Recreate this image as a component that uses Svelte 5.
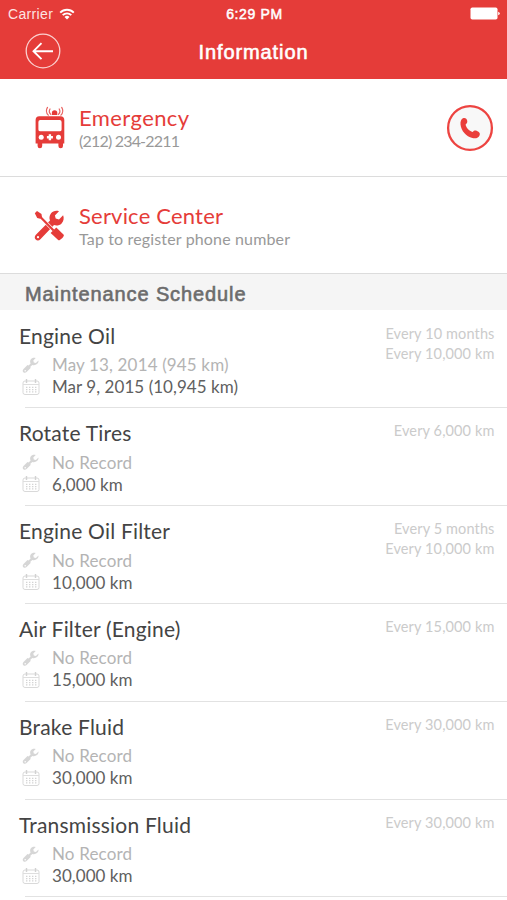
<script lang="ts">
	type Item = {
		name: string;
		last: string;
		next: string;
		every: string[];
	};

	const items: Item[] = [
		{
			name: 'Engine Oil',
			last: 'May 13, 2014 (945 km)',
			next: 'Mar 9, 2015 (10,945 km)',
			every: ['Every 10 months', 'Every 10,000 km']
		},
		{ name: 'Rotate Tires', last: 'No Record', next: '6,000 km', every: ['Every 6,000 km'] },
		{
			name: 'Engine Oil Filter',
			last: 'No Record',
			next: '10,000 km',
			every: ['Every 5 months', 'Every 10,000 km']
		},
		{ name: 'Air Filter (Engine)', last: 'No Record', next: '15,000 km', every: ['Every 15,000 km'] },
		{ name: 'Brake Fluid', last: 'No Record', next: '30,000 km', every: ['Every 30,000 km'] },
		{ name: 'Transmission Fluid', last: 'No Record', next: '30,000 km', every: ['Every 30,000 km'] }
	];
</script>

<div class="screen">
	<header>
		<div class="status">
			<div class="carrier">
				<span>Carrier</span>
				<svg width="16" height="12" viewBox="0 0 16 12">
					<g fill="none" stroke="#fff" stroke-width="1.9">
						<path d="M1.2 4.6a9.6 9.6 0 0 1 13.6 0" />
						<path d="M3.7 7.1a6.1 6.1 0 0 1 8.600 0" />
					</g>
					<path d="M8 11.5 5.500 8.900a3.600 3.600 0 0 1 5 0z" fill="#fff" />
				</svg>
			</div>
			<span class="time">6:29 PM</span>
			<svg class="battery" width="31" height="13" viewBox="0 0 31 13">
				<rect x="0.5" y="0.5" width="27" height="12" rx="1.8" fill="#fff" />
				<path d="M28.2 4.800q1.600.5 1.600 1.700t-1.600 1.700z" fill="#fff" />
			</svg>
		</div>
		<div class="nav">
			<button class="back" aria-label="Back">
				<svg width="36" height="36" viewBox="0 0 36 36" fill="none" stroke="#fff">
					<circle cx="18" cy="18" r="16.8" stroke-width="1.3" stroke="#fbd0cf" />
					<path d="M28 18.2H9M16.5 10.2l-8 8 8 8" stroke-width="1.9" />
				</svg>
			</button>
			<h1>Information</h1>
		</div>
	</header>

	<section class="contact">
		<svg class="contact-icon" width="32" height="44" viewBox="0 0 32 44">
			<g fill="none" stroke="#e96260" stroke-width="1.2" stroke-linecap="round">
				<path d="M16 3q-1.800 3 .8 5.400M13.500 1.400q-2.600 4.200.8 7.800M25.200 3q1.800 3-.8 5.400M27.700 1.400q2.600 4.200-.8 7.800" />
			</g>
			<path d="M17.900 9V6.900a2.700 2.700 0 0 1 5.400 0V9z" fill="#e53c39" />
			<path
				fill="#e53c39"
				fill-rule="evenodd"
				d="M5.500 10.200h21a3.800 3.800 0 0 1 3.800 3.800v23.500h-1.300v2.500a1.900 1.900 0 0 1-4.600 0v-2.500h-16.200v2.500a1.900 1.900 0 0 1-4.600 0v-2.500h-2v-23.500a3.800 3.800 0 0 1 3.900-3.800zM6.300 14a1.900 1.900 0 0 0-1.900 1.900v7.500a1.900 1.900 0 0 0 1.900 1.900h19.400a1.900 1.900 0 0 0 1.900-1.900v-7.500a1.900 1.900 0 0 0-1.900-1.900z"
			/>
			<circle cx="7.200" cy="31.300" r="2.500" fill="#fff" />
			<circle cx="24.500" cy="31.300" r="2.500" fill="#fff" />
			<path d="M15.900 28.300v6M12.900 31.300h6" stroke="#fff" stroke-width="2.400" />
		</svg>
		<div>
			<h2>Emergency</h2>
			<p class="phone">(212) 234-2211</p>
		</div>
		<button class="call" aria-label="Call">
			<svg width="48" height="48" viewBox="0 0 48 48">
				<circle cx="24" cy="24" r="21.9" fill="#f8f8f8" stroke="#ed4441" stroke-width="2.3" />
				<path
					fill="#ea3e3b"
					d="M17 14.200c1.800-.7 3.500 0 4.100 2.100.5 1.700.2 3-1.500 4.100.5 3 3.300 6.300 7.200 7.600 1.200-1.500 2.400-1.800 4.200-1 2.300.9 3.300 2.200 2.700 3.900-.8 2.600-3.800 4-7.300 3.100-6.200-1.500-11.300-7.200-11.900-13.500-.3-3.100.8-5.600 2.500-6.300z"
				/>
			</svg>
		</button>
	</section>

	<section class="contact service">
		<svg class="contact-icon" width="32" height="32" viewBox="0 0 32 32">
			<path
				fill="#e53c39"
				d="M29.100 5.300l-4.100 4.100-3.300-.8-.8-3.200 4.100-4.100c-3-1.100-6.300-.1-8.100 2.300-1.600 2.100-1.800 4.700-.9 7L1.900 24.800c-1.500 1.500-1.500 3.500-.2 4.700 1.300 1.300 3.300 1.200 4.700-.3L20 15.100c2.700.9 5.600.2 7.600-1.700 2.200-2.200 2.600-5.400 1.500-8.100z"
			/>
			<circle cx="4" cy="27.200" r="1.100" fill="#fff" />
			<path d="M7 7.500 18.800 19.600" stroke="#fff" stroke-width="3.400" />
			<path d="M4 4.500 19.600 20.600" stroke="#e53c39" stroke-width="2.200" />
			<path d="M.8 3.200 3 .9l4.500 3.200.5 3.200-1.800 1.500-3-.9z" fill="#e53c39" />
			<path d="M16.600 22.900l5.700-5.500 7.400 7.300c1.300 1.300-4.100 6.600-5.500 5.400z" fill="#e53c39" />
		</svg>
		<div>
			<h2>Service Center</h2>
			<p>Tap to register phone number</p>
		</div>
	</section>

	<h3>Maintenance Schedule</h3>

	<ul>
		{#each items as item}
			<li>
				<div class="item">
					<h4>{item.name}</h4>
					<div class="line last">
						<svg width="18" height="18" viewBox="0 0 18 18">
							<path
								fill="#d6d6d6"
								d="M16.500 4.600l-2.600 2.300-2.100-.4-.5-2 2.400-2.500c-1.900-.7-4-.1-5 1.600-.8 1.300-.7 2.700-.1 3.900L6.700 9.400l-1.200-.3-4 3.900c-1.200 1.200-.9 2.800.1 3.500 1 .6 2.100.4 3-.4l4-4-.2-1.300 1.900-1.900c1.600.6 3.400.3 4.700-.8 1-.9 1.700-2.200 1.500-3.500z"
							/>
							<circle cx="3.200" cy="14.800" r=".8" fill="#fff" />
						</svg>
						<span>{item.last}</span>
					</div>
					<div class="line next">
						<svg width="18" height="18" viewBox="0 0 18 18">
							<rect x="1" y="3" width="16" height="13.500" rx="2" fill="none" stroke="#d9d9d9" />
							<path d="M1 6.500h16" stroke="#dedede" />
							<path d="M4.500 1v4M13.500 1v4" stroke="#d2d2d2" stroke-width="1.400" />
							<path
								d="M4 9.300h11M4 11.600h11M4 13.900h11"
								stroke="#d4d4d4"
								stroke-width="1.200"
								stroke-dasharray="1.400 1.600"
							/>
						</svg>
						<span>{item.next}</span>
					</div>
				</div>
				<div class="every">
					{#each item.every as text}
						<span>{text}</span>
					{/each}
				</div>
			</li>
		{/each}
	</ul>
</div>

<style>
	:global(body) {
		margin: 0;
		background: #fff;
	}

	.screen {
		width: 507px;
		height: 900px;
		overflow: hidden;
		font-family: Lato, sans-serif;
		background: #fff;
	}

	h1,
	h2,
	h3,
	h4,
	p,
	ul {
		margin: 0;
		padding: 0;
		font-weight: 400;
	}

	svg {
		display: block;
		flex: none;
	}

	button {
		padding: 0;
		border: none;
		background: none;
	}

	header {
		box-sizing: border-box;
		height: 79px;
		color: #fff;
		background: #e53c39;
		font-family: 'Liberation Sans', Arial, sans-serif;
	}

	.status {
		display: grid;
		grid-template-columns: 1fr auto 1fr;
		align-items: center;
		height: 27px;
		padding: 0 6px 0 8px;
		font-size: 14px;
	}
	.carrier {
		display: flex;
		align-items: center;
		gap: 6px;
		color: #fde3e2;
		letter-spacing: 0.35px;
	}
	.time {
		font-size: 14px;
		letter-spacing: 0.65px;
		-webkit-text-stroke: 0.5px #fff;
	}
	.battery {
		justify-self: end;
	}

	.nav {
		display: grid;
		grid-template-columns: 1fr auto 1fr;
		align-items: center;
		height: 48px;
		padding: 0 25px;
	}
	.back {
		width: 36px;
	}
	h1 {
		padding-top: 3px;
		font-size: 20px;
		letter-spacing: 0.9px;
		-webkit-text-stroke: 0.6px #fff;
	}

	.contact {
		box-sizing: border-box;
		display: flex;
		align-items: center;
		height: 98px;
		padding: 0 13px 0 34px;
		border-bottom: 1px solid #dcdcdc;
	}
	.service {
		height: 97px;
		padding-top: 1px;
	}
	.contact-icon {
		margin-right: 13px;
	}
	h2 {
		color: #e53c39;
		font-size: 22px;
		line-height: 26px;
		letter-spacing: 0.4px;
	}
	.service h2 {
		letter-spacing: 0.2px;
	}
	.contact p {
		color: #999;
		font-size: 16px;
		line-height: 20px;
		letter-spacing: 0.15px;
	}
	.contact .phone {
		letter-spacing: -0.8px;
	}
	.call {
		margin-left: auto;
	}

	h3 {
		height: 36px;
		padding-left: 25px;
		color: #6c6c6c;
		background: #f5f5f5;
		font-family: 'Liberation Sans', Arial, sans-serif;
		font-size: 20px;
		line-height: 40px;
		letter-spacing: 0.9px;
		-webkit-text-stroke: 0.6px #6c6c6c;
	}

	ul {
		padding-top: 0.6px;
		list-style: none;
	}
	li {
		box-sizing: border-box;
		display: flex;
		justify-content: space-between;
		height: 97.8px;
		padding: 11px 12.5px 0 19px;
		background: linear-gradient(#e2e2e2, #e2e2e2) 25px 100% / 100% 1px no-repeat;
	}
	h4 {
		color: #444;
		font-size: 21px;
		line-height: 28px;
		letter-spacing: 0.2px;
	}
	.line {
		display: flex;
		align-items: center;
		gap: 12px;
		height: 22px;
		padding-left: 3px;
		font-size: 17px;
	}
	.last {
		margin-top: 4px;
		color: #b4b4b4;
		letter-spacing: 0.15px;
	}
	.next {
		color: #606060;
		letter-spacing: 0.05px;
	}
	.every {
		display: flex;
		flex-direction: column;
		align-items: flex-end;
		padding-top: 2px;
		color: #cbcbcb;
		font-size: 14.5px;
		line-height: 20px;
		letter-spacing: 0.12px;
	}
</style>
